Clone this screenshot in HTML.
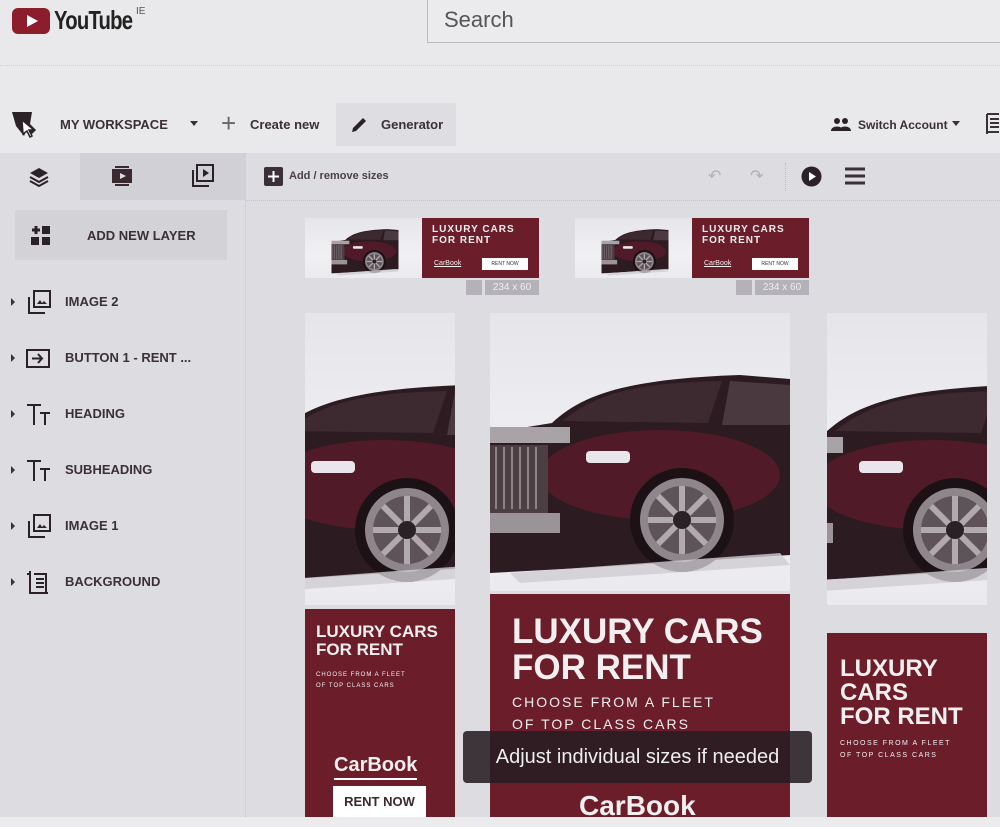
<!DOCTYPE html>
<html><head><meta charset="utf-8">
<style>
*{margin:0;padding:0;box-sizing:border-box}
body{width:1000px;height:827px;overflow:hidden;background:#e9e8ea;font-family:"Liberation Sans",sans-serif;color:#2a2226;position:relative}
.a{position:absolute}
.b{font-weight:bold}
.lay{position:absolute;left:0;width:245px;height:24px;font-size:13px;font-weight:bold;color:#3a3036}
.lay .t{position:absolute;left:65px;top:4px}
.lay .ar{position:absolute;left:11px;top:8px;width:0;height:0;border-left:4px solid #3a3036;border-top:4px solid transparent;border-bottom:4px solid transparent}
.lay svg{position:absolute;left:26px;top:0}
.red{background:#6b1e2a;color:#f3eef0;position:absolute;overflow:hidden}
.img{position:absolute;overflow:hidden;background:linear-gradient(#e6e5ea,#f1f0f3 60%,#ebeaee)}
.cond{font-family:"Liberation Sans",sans-serif;font-weight:bold}
</style></head><body>
<svg class="a" style="left:0;top:0" width="0" height="0"><defs>
<g id="car">
<path d="M0,118 L62,108 C92,80 135,64 250,60 L300,64 L300,240 L110,252 L0,258 Z" fill="#2c1b21"/>
<ellipse cx="170" cy="160" rx="120" ry="45" fill="#5e1b2b" opacity=".75"/>
<path d="M72,106 C110,76 150,68 232,66 L218,108 Z" fill="#3d2a31"/>
<path d="M240,66 L300,70 L300,110 L232,110 Z" fill="#4a3a40"/>
<rect x="0" y="112" width="80" height="16" fill="#a9a3a7"/>
<rect x="0" y="130" width="58" height="68" fill="#4d3e44"/>
<path d="M6,132v62M14,132v62M22,132v62M30,132v62M38,132v62M46,132v62" stroke="#8c8388" stroke-width="2"/>
<rect x="0" y="198" width="70" height="20" fill="#9a9498"/>
<rect x="96" y="136" width="44" height="12" rx="4" fill="#e8e6ea"/>
<circle cx="192" cy="205" r="52" fill="#1c1216"/>
<circle cx="192" cy="205" r="42" fill="#8e868b"/>
<circle cx="192" cy="205" r="34" fill="#5d5358"/>
<path d="M192,171v68M158,205h68M168,181l48,48M216,181l-48,48" stroke="#b0a9ad" stroke-width="6"/>
<circle cx="192" cy="205" r="9" fill="#2b2025"/>
<path d="M20,258 L290,238 L300,250 L30,268 Z" fill="#cfcdd2" opacity=".8"/>
</g></defs></svg>

<!-- header -->
<svg class="a" style="left:12px;top:8px" width="40" height="26"><rect width="38" height="26" rx="6" fill="#8b1d2c"/><path d="M15,7 L26,13 L15,19Z" fill="#fff"/></svg>
<div class="a b" style="left:54px;top:5px;font-size:26px;letter-spacing:-1px;color:#222;transform:scaleX(.78);transform-origin:0 0">YouTube</div>
<div class="a" style="left:136px;top:6px;font-size:10px;color:#555">IE</div>
<div class="a" style="left:427px;top:0;width:573px;height:43px;border-left:1px solid #bbb;border-bottom:1px solid #bbb;background:#ebeaec"></div>
<div class="a" style="left:444px;top:7px;font-size:22px;color:#555">Search</div>
<div class="a" style="left:0;top:65px;width:1000px;border-top:1px dotted #d3d2d6"></div>

<!-- toolbar -->
<svg class="a" style="left:10px;top:110px" width="30" height="28"><path d="M2,2 L22,2 L20,14 L26,20 L22,24 L17,19 L14,26 L6,16 Z" fill="#2a2226"/><path d="M12,10 L24,20 L19,20 L22,26 L20,27 L17,21 L13,24Z" fill="#fff" stroke="#2a2226" stroke-width="1.5"/></svg>
<div class="a b" style="left:60px;top:117px;font-size:13px;color:#3a3036">MY WORKSPACE</div>
<div class="a" style="left:190px;top:121px;border-top:5px solid #3a3036;border-left:4px solid transparent;border-right:4px solid transparent"></div>
<div class="a" style="left:221px;top:108px;font-size:26px;color:#666;line-height:30px">+</div>
<div class="a b" style="left:250px;top:117px;font-size:13px;color:#3a3036">Create new</div>
<div class="a" style="left:336px;top:103px;width:120px;height:43px;background:#dedde2"></div>
<svg class="a" style="left:349px;top:115px" width="20" height="20"><path d="M3,17 L4,13 L14,3 L17,6 L7,16 Z" fill="#2a2226"/></svg>
<div class="a b" style="left:381px;top:117px;font-size:13px;color:#3a3036">Generator</div>
<svg class="a" style="left:831px;top:117px" width="22" height="15"><circle cx="6" cy="4" r="3" fill="#2a2226"/><circle cx="14" cy="4" r="3" fill="#2a2226"/><path d="M0,14 C0,8 12,8 12,14Z M8,14 C8,8 20,8 20,14Z" fill="#2a2226"/></svg>
<div class="a b" style="left:858px;top:118px;font-size:12px;color:#3a3036">Switch Account</div>
<div class="a" style="left:952px;top:121px;border-top:5px solid #3a3036;border-left:4px solid transparent;border-right:4px solid transparent"></div>
<svg class="a" style="left:985px;top:112px" width="15" height="24"><path d="M2,2v20M2,2h12M5,7h9M5,11h9M5,15h9M2,20h12" stroke="#3a3036" stroke-width="2" fill="none"/></svg>

<!-- panel -->
<div class="a" style="left:0;top:153px;width:1000px;height:664px;background:#dddce1"></div>
<div class="a" style="left:80px;top:153px;width:165px;height:47px;background:#d1d0d6"></div>
<div class="a" style="left:245px;top:153px;width:1px;height:664px;border-left:1px dotted #c5c4ca"></div>
<div class="a" style="left:245px;top:200px;width:755px;border-top:1px dotted #c5c4ca"></div>
<svg class="a" style="left:28px;top:165px" width="22" height="22"><path d="M11,3 L20,8 L11,13 L2,8Z" fill="#2a2226"/><path d="M2,12 L11,17 L20,12 M2,16 L11,21 L20,16" stroke="#2a2226" stroke-width="2" fill="none"/></svg>
<svg class="a" style="left:110px;top:164px" width="24" height="24"><rect x="2" y="5" width="20" height="14" fill="#3a2a30"/><path d="M10,9 L16,12 L10,15Z" fill="#ddd"/><path d="M5,3h14M5,21h14" stroke="#3a2a30" stroke-width="2"/></svg>
<svg class="a" style="left:190px;top:163px" width="26" height="26"><rect x="7" y="2" width="16" height="16" fill="none" stroke="#2a2226" stroke-width="2"/><path d="M3,7v16h16" fill="none" stroke="#2a2226" stroke-width="2"/><path d="M13,6 L19,10 L13,14Z" fill="#2a2226"/></svg>
<svg class="a" style="left:264px;top:167px" width="19" height="19"><rect width="19" height="19" rx="2" fill="#3a3036"/><path d="M9.5,4v11M4,9.5h11" stroke="#fff" stroke-width="2"/></svg>
<div class="a b" style="left:289px;top:170px;font-size:11px;color:#4a4046">Add / remove sizes</div>
<div class="a" style="left:708px;top:166px;font-size:16px;color:#b0aeb3">↶</div>
<div class="a" style="left:750px;top:166px;font-size:16px;color:#b0aeb3">↷</div>
<div class="a" style="left:785px;top:163px;height:28px;border-left:1px dotted #bbb"></div>
<svg class="a" style="left:801px;top:166px" width="21" height="21"><circle cx="10.5" cy="10.5" r="10" fill="#2a2226"/><path d="M8,6 L15,10.5 L8,15Z" fill="#fff"/></svg>
<svg class="a" style="left:845px;top:167px" width="20" height="18"><path d="M0,2h20M0,9h20M0,16h20" stroke="#3a3036" stroke-width="3"/></svg>

<!-- sidebar -->
<div class="a" style="left:15px;top:210px;width:212px;height:50px;background:#d3d2d7"></div>
<svg class="a" style="left:30px;top:225px" width="22" height="22"><path d="M2,5h8M6,1v8" stroke="#2a2226" stroke-width="3"/><rect x="12" y="1" width="8" height="8" fill="#2a2226"/><rect x="1" y="12" width="8" height="8" fill="#2a2226"/><rect x="12" y="12" width="8" height="8" fill="#2a2226"/></svg>
<div class="a b" style="left:87px;top:228px;font-size:13px;color:#3a3036">ADD NEW LAYER</div>

<div class="lay" style="top:290px"><div class="ar"></div><svg width="26" height="26"><rect x="8" y="1" width="16" height="16" fill="none" stroke="#2a2226" stroke-width="2"/><path d="M3,7v16h16" fill="none" stroke="#2a2226" stroke-width="2"/><path d="M11,14 L14,10 L16,13 L18,11 L21,14Z" fill="#2a2226"/></svg><span class="t">IMAGE 2</span></div>
<div class="lay" style="top:346px"><div class="ar"></div><svg width="26" height="26"><rect x="1" y="4" width="22" height="17" fill="none" stroke="#2a2226" stroke-width="2"/><path d="M6,12.5h10M12,8l4,4.5-4,4.5" stroke="#2a2226" stroke-width="2" fill="none"/></svg><span class="t">BUTTON 1 - RENT ...</span></div>
<div class="lay" style="top:402px"><div class="ar"></div><svg width="28" height="26"><path d="M1,3h14M8,3v20M14,11h10M19,11v12" stroke="#2a2226" stroke-width="2" fill="none"/></svg><span class="t">HEADING</span></div>
<div class="lay" style="top:458px"><div class="ar"></div><svg width="28" height="26"><path d="M1,3h14M8,3v20M14,11h10M19,11v12" stroke="#2a2226" stroke-width="2" fill="none"/></svg><span class="t">SUBHEADING</span></div>
<div class="lay" style="top:514px"><div class="ar"></div><svg width="26" height="26"><rect x="8" y="1" width="16" height="16" fill="none" stroke="#2a2226" stroke-width="2"/><path d="M3,7v16h16" fill="none" stroke="#2a2226" stroke-width="2"/><path d="M11,14 L14,10 L16,13 L18,11 L21,14Z" fill="#2a2226"/></svg><span class="t">IMAGE 1</span></div>
<div class="lay" style="top:570px"><div class="ar"></div><svg width="26" height="28"><path d="M4,1v22h18M8,4h12v16M10,9h8M10,13h8M10,17h8M1,4h3M20,20v4" stroke="#2a2226" stroke-width="2" fill="none"/></svg><span class="t">BACKGROUND</span></div>

<!-- small banners -->
<div class="img" style="left:305px;top:218px;width:117px;height:60px"><svg class="a" style="left:12px;top:10px" width="96" height="48" viewBox="0 55 300 215"><use href="#car"/></svg></div>
<div class="red" style="left:422px;top:218px;width:117px;height:60px"><div class="a b" style="left:10px;top:6px;font-size:10px;letter-spacing:1px;line-height:11px">LUXURY CARS<br>FOR RENT</div><div class="a" style="left:12px;top:42px;font-size:7px;text-decoration:underline">CarBook</div><div class="a" style="left:60px;top:40px;width:46px;height:12px;background:#fff;color:#333;font-size:5px;text-align:center;line-height:12px">RENT NOW</div></div>
<div class="a" style="left:466px;top:280px;width:16px;height:15px;background:#b4b2b8"></div>
<div class="a" style="left:485px;top:280px;width:54px;height:15px;background:#b4b2b8;color:#eee;font-size:10px;text-align:center;line-height:15px">234 x 60</div>

<div class="img" style="left:575px;top:218px;width:117px;height:60px"><svg class="a" style="left:12px;top:10px" width="96" height="48" viewBox="0 55 300 215"><use href="#car"/></svg></div>
<div class="red" style="left:692px;top:218px;width:117px;height:60px"><div class="a b" style="left:10px;top:6px;font-size:10px;letter-spacing:1px;line-height:11px">LUXURY CARS<br>FOR RENT</div><div class="a" style="left:12px;top:42px;font-size:7px;text-decoration:underline">CarBook</div><div class="a" style="left:60px;top:40px;width:46px;height:12px;background:#fff;color:#333;font-size:5px;text-align:center;line-height:12px">RENT NOW</div></div>
<div class="a" style="left:736px;top:280px;width:16px;height:15px;background:#b4b2b8"></div>
<div class="a" style="left:755px;top:280px;width:54px;height:15px;background:#b4b2b8;color:#eee;font-size:10px;text-align:center;line-height:15px">234 x 60</div>

<!-- tall banners -->
<div class="img" style="left:305px;top:313px;width:150px;height:292px"><svg class="a" style="left:-90px;top:12px" width="300" height="280" viewBox="0 0 300 280"><use href="#car"/></svg></div>
<div class="red" style="left:305px;top:609px;width:150px;height:208px">
<div class="a cond" style="left:11px;top:14px;font-size:17px;line-height:18px">LUXURY CARS<br>FOR RENT</div>
<div class="a" style="left:11px;top:61px;font-size:6px;line-height:11px;letter-spacing:1px">CHOOSE FROM A FLEET<br>OF TOP CLASS CARS</div>
<div class="a b" style="left:29px;top:145px;font-size:20px;border-bottom:2px solid #fff;padding-bottom:1px">CarBook</div>
<div class="a cond" style="left:28px;top:177px;width:93px;height:31px;background:#fff;color:#3a2a30;font-size:13px;text-align:center;line-height:31px">RENT NOW</div>
</div>

<div class="img" style="left:490px;top:313px;width:300px;height:278px"><svg class="a" style="left:0;top:2px" width="300" height="280" viewBox="0 0 300 280"><use href="#car"/></svg></div>
<div class="red" style="left:490px;top:594px;width:300px;height:223px">
<div class="a cond" style="left:22px;top:20px;font-size:35px;line-height:36px">LUXURY CARS<br>FOR RENT</div>
<div class="a" style="left:22px;top:97px;font-size:14px;line-height:22px;letter-spacing:2px">CHOOSE FROM A FLEET<br>OF TOP CLASS CARS</div>
<div class="a b" style="left:89px;top:196px;font-size:28px">CarBook</div>
</div>

<div class="img" style="left:827px;top:313px;width:160px;height:292px"><svg class="a" style="left:-64px;top:12px" width="300" height="280" viewBox="0 0 300 280"><use href="#car"/></svg></div>
<div class="red" style="left:827px;top:633px;width:160px;height:184px">
<div class="a cond" style="left:13px;top:24px;font-size:24px;line-height:24px">LUXURY<br>CARS<br>FOR RENT</div>
<div class="a" style="left:13px;top:105px;font-size:7px;line-height:12px;letter-spacing:1.5px">CHOOSE FROM A FLEET<br>OF TOP CLASS CARS</div>
</div>

<div class="a" style="left:463px;top:731px;width:349px;height:52px;background:rgba(40,30,34,.88);border-radius:4px;color:#eee;font-size:20px;text-align:center;line-height:52px">Adjust individual sizes if needed</div>
<div class="a" style="left:0;top:817px;width:1000px;height:10px;background:#ececee"></div>
</body></html>
